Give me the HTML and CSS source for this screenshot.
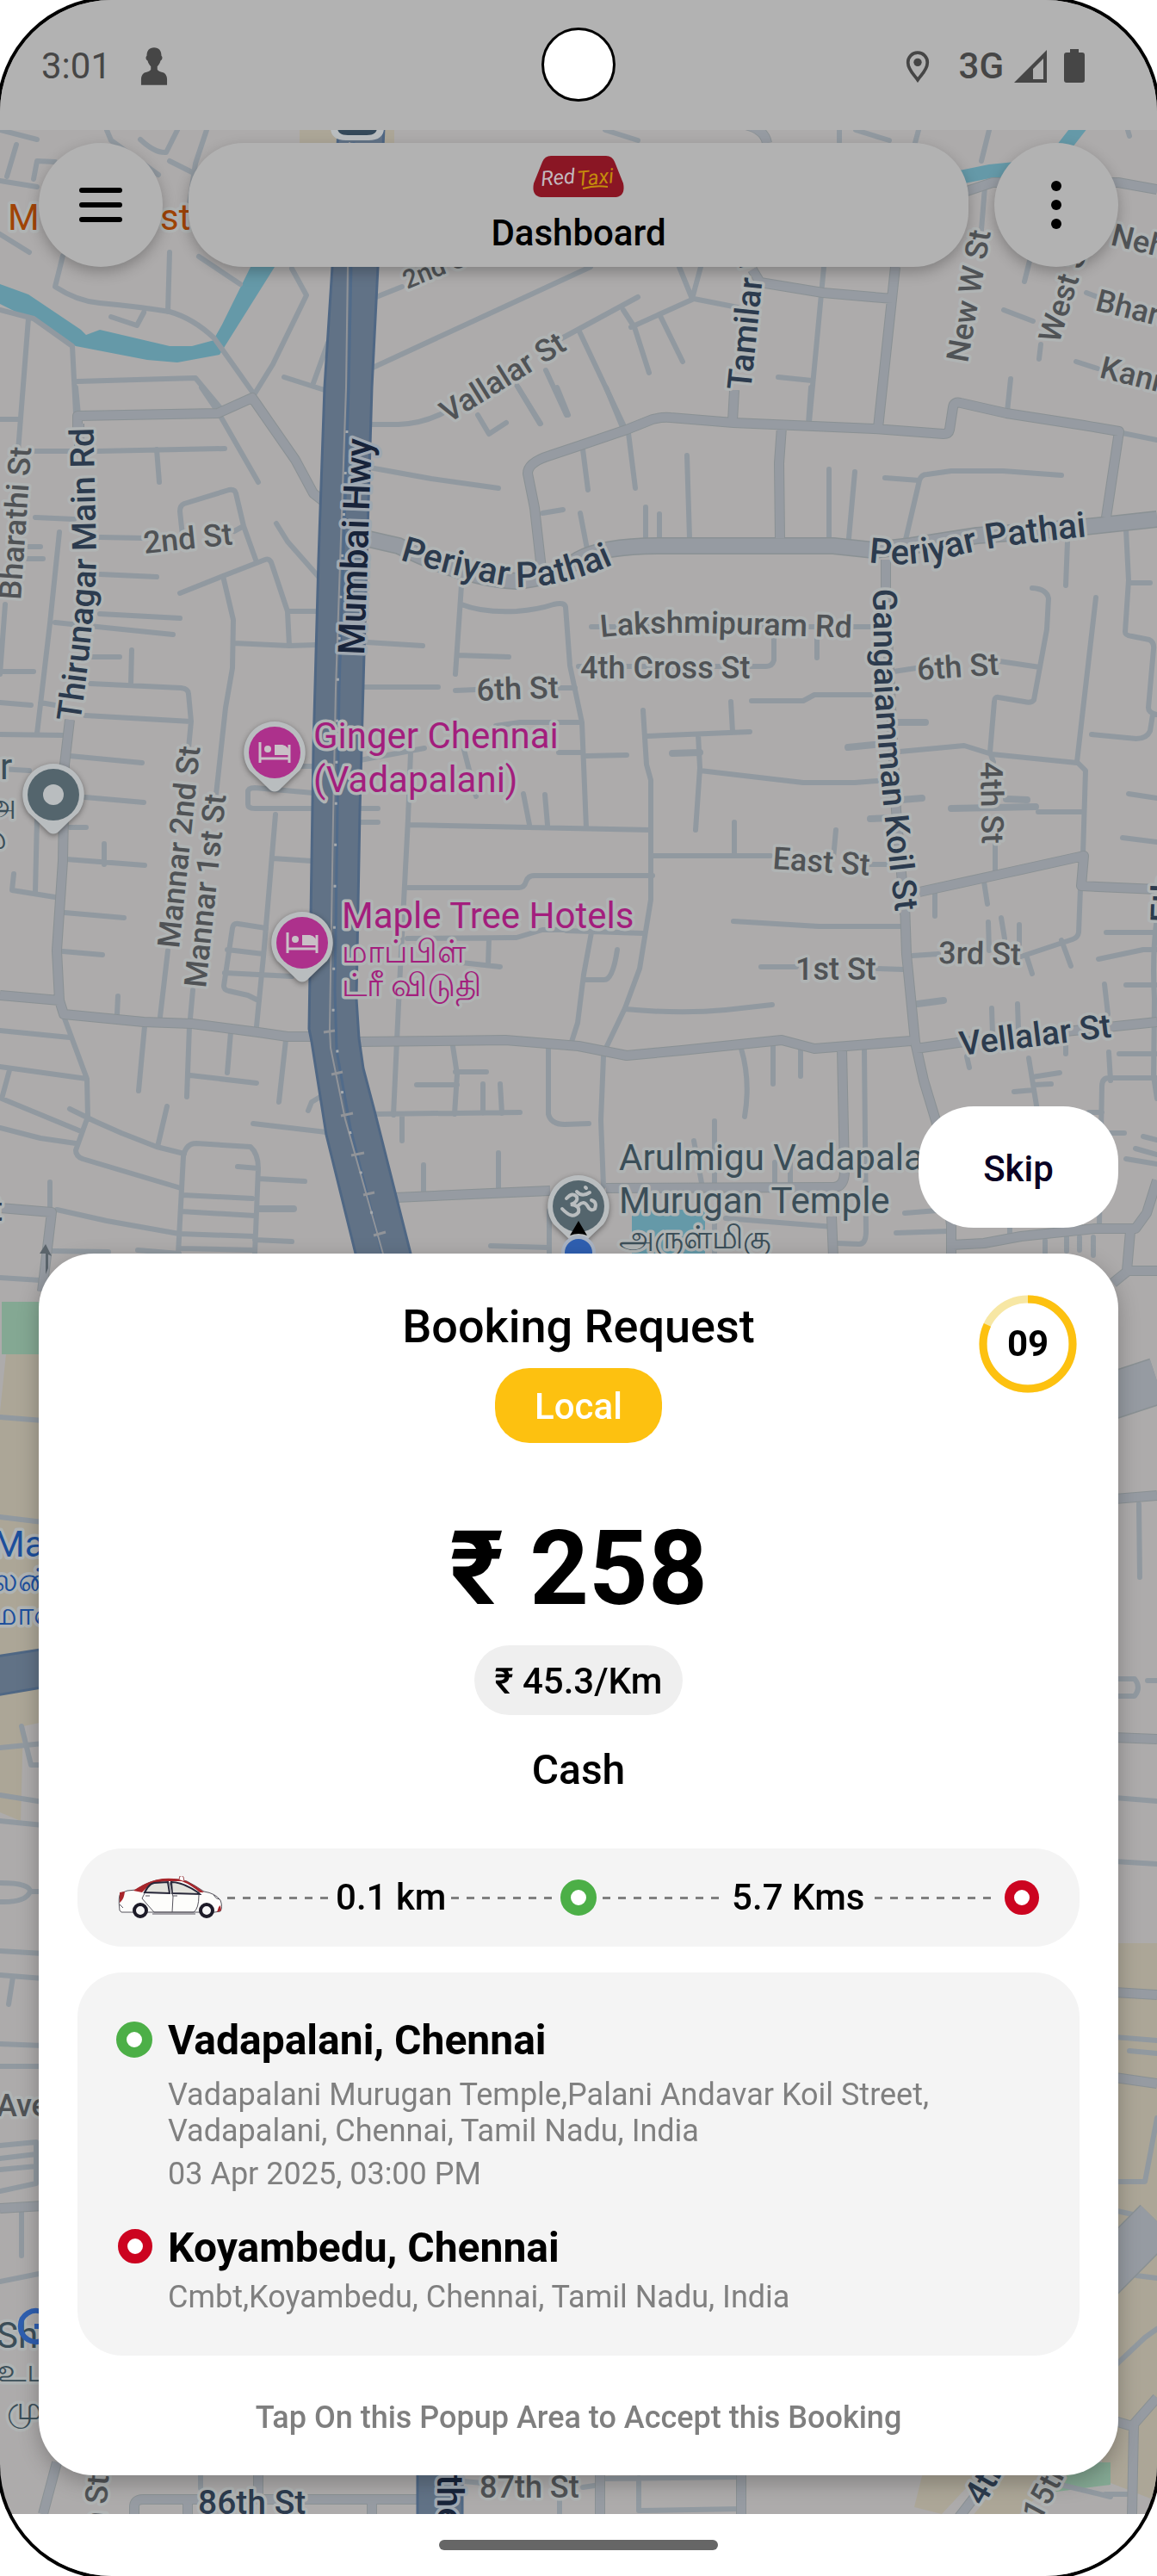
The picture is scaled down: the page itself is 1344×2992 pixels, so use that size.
FILE: index.html
```
<!DOCTYPE html>
<html lang="en">
<head>
    <meta charset="UTF-8">
    <meta name="viewport" content="width=device-width, initial-scale=1.0">
    <link rel="stylesheet" href="styles.css">
    <title>Red Taxi - Booking Request</title>
</head>
<body>
<div class="phone">

    <!-- map -->
    <svg class="map" viewBox="0 0 1344 2992" preserveAspectRatio="xMidYMin slice" aria-hidden="true">
        <defs>
            <path id="thirunagar" d="M93 839Q108 740 112 650L108 480"/>
            <path id="periyar1" d="M464 650Q540 673 592 681Q650 686 724 650"/>
            <path id="periyar2" d="M1009 653Q1060 660 1110 646Q1150 634 1275 622"/>
            <path id="lakshmi" d="M698 740Q770 733 840 736L1000 741"/>
            <path id="gangai" d="M1014 684L1016 800Q1024 940 1044 1090"/>
            <g id="bed">
                <path d="M-17-12V12M-17 7H17M17-9V12" fill="none" stroke="#c9c0c6" stroke-width="3"/>
                <circle cx="-8" cy="-4" r="4" fill="#c9c0c6"/>
                <path d="M0-9H9Q17-8 17 3H0z" fill="#c9c0c6"/>
            </g>
            <path id="pin" d="M0-36A36 36 0 0 1 29 21Q18 31 8 41Q0 50-8 41Q-18 31-29 21A36 36 0 0 1 0-36z"/>
        </defs>

        <!-- parks and land -->
        <path fill="#aca697" d="M0 1640L7 1573H60V1998L27 2005L24 2115L0 2105zM1280 2257H1344V2905L1280 2880zM1075 2860H1150L1094 2920L1062 2912zM1180 2860H1245L1182 2922H1130zM348 151H458V166H348z"/>
        <path fill="#84a893" d="M2 1512H60V1573H2zM1220 2895L1240 2860H1290V2886z"/>
        <!-- water -->
        <path fill="#6599a8" d="M0 330L33 342L94 383L100 389L116 383L197 402L223 402L249 395L296 300H319L255 412L206 421L171 418L88 402L34 370L0 353zM296 310L310 240H330L319 310L255 412L245 400zM734 1405H819V1465H734z"/>
        <path fill="none" stroke="#6599a8" stroke-width="16" d="M1110 207L1150 199L1200 194L1235 172L1256 145"/>

        <!-- small streets -->
        <g class="street">
            <path d="M0 151L43 162M19 168L8 205M0 210L43 217M39 208L43 187L64 188M0 272L34 293M124 151L129 163L184 203M163 162Q180 178 193 177L206 151M240 151L227 190M197 187L223 200M227 190L218 250"/>
            <path d="M73 297L64 333Q90 350 116 352Q160 356 197 362Q225 370 249 393L293 455M197 293L195 362M231 298L279 330M129 368L159 378L167 363M339 312L356 343L317 423L296 457M381 398L364 445M330 438L377 453M0 360L39 370L84 402L88 480M33 370L21 524M90 443L227 439L257 475"/>
            <path d="M433 427L686 310M437 345L467 333M429 493H463Q490 492 514 480M634 403L741 345M673 385L724 493M733 380L806 347L857 357M724 360L737 380L754 433M767 367L793 420M789 310L804 347L814 310M634 430L658 482M600 447L627 492M957 310L940 490M904 438L943 442M703 151L741 163M994 151L1033 163M975 151V165M1067 151L1063 166M1149 151L1140 187M1144 217L1140 267M1196 303L1190 327M1166 360L1200 373M1209 400L1207 417M1174 440L1170 478M1250 420L1275 428M1262 340L1275 345M1310 151L1312 158"/>
            <path d="M0 487H21M88 450L92 492M41 524H81M114 524L261 521M182 522L185 560M257 485L300 560M234 450L253 478M212 622L209 594Q209 587 214 585L266 569Q273 568 274 573L283 611L297 650M272 617L283 611M41 601L86 603M116 624L167 625M69 618L58 724L43 852M32 635H47M32 649H50M6 702L0 783M0 780H39M116 667L182 670M116 713L209 718M64 723L201 737M107 763H139M153 755L152 795M105 794L210 799Q219 800 219 806L222 838L219 869M99 831L222 838M0 816L36 819M47 816L64 819M0 853L73 854"/>
            <path d="M209 689L259 669L308 650Q314 648 316 656L334 710L336 750M259 669L271 720L270 776L262 822L251 923M334 710H369M272 747L336 750L368 749M321 608L334 629L371 671M81 878L165 886M99 926L167 932M81 961H100M0 893L34 895M364 921L296 915Q288 915 288 920V934Q288 939 296 939H364M351 890H364M320 946L314 1017L306 1111L298 1192M317 997L362 1000"/>
            <path d="M429 543L501 556L579 567M555 482L568 504L588 491M602 450L628 492M647 450L660 482M630 596L654 592M536 680L529 783M536 702Q561 712 600 710Q625 708 643 702Q656 699 657 705L662 773L676 839L681 962M531 761L591 763M426 746L491 750M418 798H509M529 802L553 801M649 799H668M418 883L493 869M576 843L604 839H676M539 871L553 925M649 874H676M477 874L474 951L465 1125L461 1209L457 1295M474 958L756 964M608 922L615 958M633 923L636 958M416 939H439M416 955H439"/>
            <path d="M1304 503L1344 511M704 450L723 496M730 503L738 567M677 522L683 569M942 450L939 492M798 529L801 625M750 589V625M766 597V625M963 545V625M993 548L986 625M1028 555L1068 558L1051 631M1068 558Q1070 551 1077 551L1105 547H1165L1233 552M674 596L683 643M1240 629L1238 680M1308 615L1311 674L1307 734Q1307 738 1315 739L1335 743Q1341 746 1340 754L1334 822Q1334 828 1344 830M1311 677H1336M1339 830L1336 849Q1332 858 1320 858L1268 853"/>
            <path d="M1199 683Q1216 684 1218 695L1216 731L1201 813Q1198 817 1190 815L1160 810Q1155 809 1155 815L1150 874L1154 885M1161 768L1208 775M1038 780L1064 776M1273 694L1251 885L1261 895L1258 992M1045 873L1120 866L1152 876L1251 886M687 728H1011M949 741V764M899 741V767Q897 774 890 774H672M873 814H933L946 807H1015M747 825L751 888L756 906V1045L743 1125L726 1171L704 1217M751 855L871 850M849 815L851 850M811 853L813 892L808 964M813 895L933 909H993L1019 907M681 878L728 877M758 994H895M853 955V993M971 964L968 997M1003 1004H1030M1206 943H1259M1311 922L1344 927M1304 973L1344 978"/>
            <path d="M474 1031H603Q609 1031 611 1024T621 1017H758M1255 1032L1253 1083Q1252 1089 1246 1091L1186 1111M1192 1109L1199 1131M1233 1092L1244 1122M1156 978V1011M1143 1024L1147 1050M1086 1038V1064M852 1070L951 1076H1049M884 1123H925M1019 1125L1049 1126M1060 1110L1090 1108M726 1172Q790 1178 843 1173L897 1167M1148 1071L1149 1104M1163 1066L1167 1090M1184 1074V1097M658 1081L747 1084M687 1083L678 1132L671 1188L664 1210M717 1103Q712 1138 702 1138H681M861 1218Q872 1255 865 1297M898 1215V1259M930 1218V1250M1004 1218L1006 1430Q1006 1445 998 1445L972 1444M701 1227L698 1301L701 1378M656 1306L684 1305M830 1302V1374M806 1325L815 1374M900 1350V1375M918 1350V1375M830 1420V1456M843 1415L968 1425M1051 1409L1101 1405M1041 1432L1101 1430"/>
            <path d="M1152 1171L1153 1202M1182 1166L1183 1195M1283 1143L1287 1178M1123 1227L1126 1240M1238 1213V1224M1288 1222L1290 1255M1344 1252H1288Q1280 1252 1280 1262L1277 1422M1195 1229L1205 1290M1199 1251L1231 1246M1178 1268L1201 1266M1201 1260L1221 1259M1344 1065Q1338 1110 1341 1160L1340 1250L1344 1276M1285 1083H1344M1276 1114L1328 1103H1344M1308 1144H1344M1300 1224H1344M1265 1292H1280M1289 1316H1306M1328 1320L1344 1324M1319 1334L1344 1341M1308 1346L1344 1352M1214 1441V1456M1239 1437V1453M1254 1437V1452M1270 1437V1458M1173 1425V1440"/>
            <path d="M43 950L41 1036M16 1015L14 1034L64 1042M121 980V1004M77 998L168 1005M75 1060L144 1066M73 1105L119 1109M137 1157L136 1178M195 1104L186 1181M224 1150L221 1183M168 1192L161 1267M220 1192L217 1274M268 1199L264 1246M332 1208L324 1280M221 1249L298 1258M309 1078L277 1073Q271 1072 270 1078L260 1145Q260 1150 266 1151L288 1156L298 1161M264 1103L306 1108M261 1130L339 1134M75 1183L101 1253L102 1297L88 1336Q88 1343 96 1346L210 1380M0 1197L81 1205M0 1239L101 1253M11 1243L2 1276L94 1314M0 1310L47 1322L88 1328M81 1288Q110 1303 141 1316L182 1332L214 1340M194 1285L183 1332"/>
            <path d="M207 1456L213 1343Q216 1328 228 1328L291 1332Q300 1340 300 1357L296 1456M276 1355L300 1357M300 1369L354 1372M212 1388L293 1392M210 1407L296 1412M296 1440L339 1442M66 1405L124 1418L208 1433L296 1436M58 1373V1406M60 1453L126 1454M160 1452L208 1456M208 1450L296 1452M294 1305L379 1315M372 1274L362 1280L358 1290M0 1484L47 1487M473 1090L600 1089L630 1080H658M568 1090L567 1121M527 1117L581 1123M526 1215L531 1248L528 1294M529 1245H565M484 1260H531M561 1259V1293M581 1259L583 1293M435 1294L604 1292M637 1215V1294Q640 1306 656 1306M467 1295V1325M492 1353V1385M579 1339V1383M638 1406V1456M570 1447L638 1449"/>
            <!-- strips beside and below the sheet -->
            <path d="M0 1646L50 1650M0 1762L50 1768M0 2030L50 2025M25 2005L36 2050H50M0 2085L50 2093M0 2115L50 2120M0 2187Q35 2187 35 2197Q30 2210 0 2209M35 2197H50M0 2266L50 2269M0 2294L50 2298M15 2296L10 2328M0 2374L50 2376M0 2400H50M0 2492L42 2488V2536L0 2545M0 2507L42 2502M0 2520L42 2516M25 2570V2620M0 2650L50 2640"/>
            <path d="M1323 1747L1324 1832M1295 1950H1318Q1326 1960 1318 1970H1295M1333 1952H1344M1295 2088L1344 2092M1295 2162L1344 2165M1295 2366L1344 2370M1312 2382L1344 2385M1295 2534H1330L1344 2460M1284 2565L1320 2573M1320 2643L1344 2646M1295 2748L1330 2715L1344 2705M1284 2897H1310M233 2870V2890M539 2882L560 2884M677 2889L697 2886M650 2905V2920M704 2879L861 2877M742 2878V2916L861 2914M1228 2885L1290 2900"/>
        </g>
        <!-- dead ends, a bit wider -->
        <path class="street stub" d="M1043 839H1075M985 868L1015 865M1047 929L1071 927M1011 951L1036 950M781 875L813 874M1105 939L1203 937M1169 928L1193 929M1066 1166L1096 1162M300 1404H341"/>

        <!-- roads: a darker edge under a lighter middle -->
        <g class="road-edge">
            <path id="roads" d="M90 500V483L253 480L293 462L343 534L364 573L378 584M92 492V530M81 836L75 888L73 1000L66 1104L69 1162M0 1156L69 1162L74 1178L167 1187L223 1189L300 1199L334 1204H362M874 313L883 328L956 340L1037 347M1040 310L1020 497M853 453L851 489M866 145Q888 150 891 166M1123 222L1153 212H1299L1344 220M908 496L905 538L906 625M672 518L639 529Q613 537 613 550L621 590L630 670M672 518L728 499L758 487Q770 484 779 485L852 491L1015 498L1096 504Q1102 504 1103 499L1107 473Q1108 466 1116 468L1169 480L1259 494L1300 501L1285 601M1029 650V700L1041 941L1051 1062M1068 1036L1173 1013L1259 994L1256 1029L1344 1033M1051 1050L1053 1108L1063 1210L1073 1255L1092 1318L1105 1423V1460M416 1210L587 1208L672 1215L728 1226L792 1220L908 1208L946 1218L1058 1209M1064 1218L1113 1211L1344 1187M978 1218L981 1360Q981 1379 968 1379L704 1380M459 1391L639 1383M966 1413L968 1460M1105 1446L1143 1444L1186 1436L1272 1427H1319L1332 1409L1344 1371M1313 1430L1309 1476H1344M1293 1490L1309 1477M0 1403L60 1408L49 1500M1295 1741L1344 1737M1295 2018L1344 2020M1295 2314L1344 2317M1295 2413L1344 2420M1295 2812L1315 2818L1344 2785M1317 2818L1315 2920M0 2565L50 2562M66 2860L50 2920M156 2925V2912Q156 2903 166 2903H485M432 2905V2920M218 2905V2920M300 2870V2900M697 2870V2920M861 2870V2920M1163 2860L1113 2925"/>
            <path class="avenue" d="M428 626L463 634Q540 672 600 675Q640 672 672 650Q700 634 766 634H968L1015 639L1058 634L1135 622L1251 613L1344 603"/>
            <path class="boulevard" d="M1280 1625L1344 1604M1270 2655L1344 2580"/>
        </g>
        <g class="road">
            <use href="#roads"/>
            <path class="avenue" d="M428 626L463 634Q540 672 600 675Q640 672 672 650Q700 634 766 634H968L1015 639L1058 634L1135 622L1251 613L1344 603"/>
            <path class="boulevard" d="M1280 1625L1344 1604M1270 2655L1344 2580"/>
        </g>

        <!-- highway -->
        <g fill="#617286" stroke="#4f6784" stroke-width="3">
            <path d="M393 148L386 310L377 450L370 650L364 870L362 1000L359 1195L362 1210L379 1318L414 1460H478L435 1290L422 1241L417 1206L414 1160L418 941L426 650L432 450L439 310L446 148z"/>
            <path d="M-5 1924L60 1914V1958L-5 1969zM485 2860H537V2925H485z"/>
        </g>
        <path fill="none" stroke="#516b8a" stroke-width="3" d="M411 165L405 450L394 800L389 1150L391 1220L407 1310L444 1456"/>
        <path fill="none" stroke="#919499" stroke-width="2" d="M406 165L402 450L390 800L387 950L383 1195L384 1217L401 1300L446 1460"/>
        <path fill="none" stroke="#919499" stroke-width="3" d="M376 1199L389 1197M385 1248L398 1245M396 1296L410 1293M408 1342L423 1339M422 1388L435 1385M434 1435L448 1431"/>
        <path fill="none" stroke="#a6aaae" stroke-width="3" stroke-dasharray="3 45" d="M403 500L392 800L387 1180L400 1290L440 1440"/>
        <path d="M384 148H446Q446 163 428 163H402Q384 163 384 148z" fill="#b9bdbf"/>
        <path d="M392 148H438Q438 157 426 157H404Q392 157 392 148z" fill="#34495a"/>
        <path d="M53 1480V1456H46L53 1445L60 1459L56 1457V1473z" fill="#5b646b"/>

        <!-- street names -->
        <g class="label">
            <text transform="translate(24 697) rotate(-86)">Bharathi St</text>
            <text transform="translate(168 643) rotate(-6)">2nd St</text>
            <text transform="translate(521 492) rotate(-32)">Vallalar St</text>
            <text class="small" transform="translate(473 336) rotate(-22)">2nd St</text>
            <text transform="translate(1124 422) rotate(-80)">New W St</text>
            <text transform="translate(1230 400) rotate(-73)">West St</text>
            <text transform="translate(1289 284) rotate(14)">Nehru</text>
            <text transform="translate(1271 360) rotate(14)">Bharathi</text>
            <text transform="translate(1276 438) rotate(14)">Kannan</text>
            <text><textPath href="#lakshmi">Lakshmipuram Rd</textPath></text>
            <text x="674" y="788">4th Cross St</text>
            <text transform="translate(554 814) rotate(-2)">6th St</text>
            <text transform="translate(1066 790) rotate(-4)">6th St</text>
            <text transform="translate(1139 885) rotate(89)">4th St</text>
            <text transform="translate(897 1009) rotate(4)">East St</text>
            <text x="924" y="1138">1st St</text>
            <text transform="translate(1090 1119) rotate(1)">3rd St</text>
            <text transform="translate(208 1102) rotate(-84)">Mannar 2nd St</text>
            <text transform="translate(239 1148) rotate(-84)">Mannar 1st St</text>
            <text x="-4" y="2458">Ave</text>
            <text x="557" y="2901">87th St</text>
            <text transform="translate(122 2938) rotate(-86)">n St</text>
            <text transform="translate(1208 2930) rotate(-62)">15th</text>
        </g>
        <g class="label main">
            <text><textPath href="#thirunagar">Thirunagar Main Rd</textPath></text>
            <text class="wide"><textPath href="#periyar1">Periyar Pathai</textPath></text>
            <text class="wide"><textPath href="#periyar2">Periyar Pathai</textPath></text>
            <text><textPath href="#gangai">Gangaiamman Koil St</textPath></text>
            <text transform="translate(872 454) rotate(-84)">Tamilar V</text>
            <text transform="translate(1116 1226) rotate(-7)">Vellalar St</text>
            <text x="-10" y="1418">t</text>
            <text transform="translate(1364 1072) rotate(-88)">Eth</text>
            <text x="230" y="2920">86th St</text>
            <text transform="translate(1142 2912) rotate(-60)">4th</text>
        </g>
        <g class="label highway">
            <text transform="translate(423 761) rotate(-88)">Mumbai Hwy</text>
            <text transform="translate(508 2874) rotate(90)">the</text>
        </g>

        <!-- places -->
        <g class="place food">
            <text x="9" y="267">M</text>
            <text x="186" y="267">st</text>
        </g>
        <g class="place hotel">
            <text x="364" y="869">Ginger Chennai</text>
            <text x="364" y="920">(Vadapalani)</text>
            <text x="397" y="1078">Maple Tree Hotels</text>
            <text class="tamil" x="397" y="1118">மாப்பிள்</text>
            <text class="tamil" x="397" y="1157">ட்ரீ விடுதி</text>
        </g>
        <g class="place temple">
            <text x="719" y="1359">Arulmigu Vadapalani</text>
            <text x="719" y="1409">Murugan Temple</text>
            <text class="tamil" x="719" y="1450">அருள்மிகு</text>
            <text x="0" y="905">r</text>
            <text class="tamil" x="-22" y="948">அ</text>
            <text class="tamil" x="-22" y="986">ம்</text>
            <text x="-4" y="2727">Sho</text>
            <text class="tamil" x="-3" y="2766">உட</text>
            <text class="tamil" x="8" y="2810">மு</text>
        </g>
        <g class="place shop">
            <text x="-8" y="1808">Mal</text>
            <text class="tamil" x="-10" y="1848">லண்</text>
            <text class="tamil" x="-10" y="1887">மான</text>
        </g>
        <path fill="none" stroke="#2f5fb0" stroke-width="6" d="M50 2686A18 18 0 1 0 50 2718M40 2702H50"/>

        <g class="pin">
            <use href="#pin" x="319" y="874"/>
            <circle cx="319" cy="874" r="30" fill="#ad318c"/>
            <use href="#bed" x="319" y="874"/>
            <use href="#pin" x="351" y="1095"/>
            <circle cx="351" cy="1095" r="30" fill="#ad318c"/>
            <use href="#bed" x="351" y="1095"/>
            <use href="#pin" x="62" y="923"/>
            <circle cx="62" cy="923" r="30" fill="#54656d"/>
            <circle cx="62" cy="923" r="12"/>
            <use href="#pin" x="672" y="1401"/>
            <circle cx="672" cy="1401" r="30" fill="#54656d"/>
            <g fill="none" stroke="#b9bdbf" stroke-width="4" stroke-linecap="round">
                <path d="M658 1392Q665 1384 670 1390Q672 1396 663 1399Q674 1400 672 1408Q665 1417 653 1404M672 1400Q678 1394 682 1400Q686 1408 691 1404Q694 1396 687 1394M670 1384Q676 1391 685 1385M680 1379L681 1380"/>
            </g>
        </g>
        <circle cx="672" cy="1455" r="18" fill="#2f5fb0" stroke="#a9b3c2" stroke-width="4"/>
        <path d="M672 1418L682 1435Q672 1431 662 1435z"/>
    </svg>

    <div class="status-bar">
        <span class="clock">3:01</span>
        <svg class="status-icon" width="32" height="46" viewBox="0 0 34 46" aria-hidden="true"><path fill="#464646" d="M17 0c6 0 9 4 9 10 2 2 1 5-1 6-1 4-3 6-4 7v4c1 2 4 3 8 4 3 2 4 5 4 8v7H1v-7c0-3 1-6 4-8 4-1 7-2 8-4v-4c-1-1-3-3-4-7-2-1-3-4-1-6 0-6 3-10 9-10z"/></svg>
        <span class="fill"></span>
        <svg class="status-icon" width="28" height="38" viewBox="0 0 30 38" aria-hidden="true"><path fill="none" stroke="#464646" stroke-width="4" d="M15 2a12 12 0 0 1 12 13c0 8-7 14-12 21C10 29 3 23 3 15A12 12 0 0 1 15 2z"/><circle cx="15" cy="14" r="5" fill="#464646"/></svg>
        <span class="network">3G</span>
        <svg class="signal" width="38" height="38" viewBox="0 0 38 38" aria-hidden="true"><path fill="#464646" fill-rule="evenodd" d="M38 0v38H0zM34 10L22 22v12h12z"/></svg>
        <svg class="battery" width="24" height="39" viewBox="0 0 24 39" aria-hidden="true"><path fill="#464646" d="M7 0h10v4h4q3 0 3 3v29q0 3-3 3H3q-3 0-3-3V7q0-3 3-3h4z"/></svg>
    </div>
    <div class="camera"></div>

    <header class="top-bar">
        <button class="round-btn" aria-label="Menu">
            <svg width="52" height="40" viewBox="0 0 52 40"><path d="M4 3H48M4 20H48M4 37H48" stroke="#000" stroke-width="6" stroke-linecap="round"/></svg>
        </button>
        <div class="title-pill">
            <svg width="106" height="48" viewBox="0 0 106 48" role="img" aria-label="Red Taxi">
                <path d="M21 0H85Q92 0 95 7L105 32Q108 48 94 48H12Q-2 48 1 32L11 7Q14 0 21 0z" fill="#8a1624"/>
                <text class="logo-text" transform="translate(10 35) rotate(-5)" fill="#c3b9bf">Red</text>
                <text class="logo-text" transform="translate(52 35) rotate(-5)" fill="#c58c0c">Taxi</text>
                <path d="M58 38Q72 34 87 36" fill="none" stroke="#c58c0c" stroke-width="2"/>
            </svg>
            <h1>Dashboard</h1>
        </div>
        <button class="round-btn" aria-label="More">
            <svg width="12" height="58" viewBox="0 0 12 58"><circle cx="6" cy="7" r="6"/><circle cx="6" cy="29" r="6"/><circle cx="6" cy="51" r="6"/></svg>
        </button>
    </header>

    <main>
        <button class="skip">Skip</button>

        <section class="sheet">
            <div class="timer">
                <svg viewBox="0 0 114 114" aria-hidden="true">
                    <circle cx="57" cy="57" r="52" class="ring"/>
                    <circle cx="57" cy="57" r="52" class="ring left" pathLength="100"/>
                </svg>
                <span>09</span>
            </div>

            <h2>Booking Request</h2>
            <div class="trip-type">Local</div>
            <div class="fare">₹ 258</div>
            <div class="rate">₹ 45.3/Km</div>
            <div class="payment">Cash</div>

            <div class="route">
                <div class="leg">
                    <svg class="car" width="121" height="50" viewBox="0 0 121 50" aria-hidden="true">
                        <path d="M2 40Q0 24 3 20Q10 16 21 16Q36 5 52 4Q70 3 80 6Q90 11 100 18Q113 20 119 28Q122 36 119 41L112 42H4z" fill="#fdfdfb" stroke="#55535c" stroke-width="1"/>
                        <path d="M18 17Q35 5 52 3Q70 2 80 6Q92 12 100 19L95 19Q83 9 74 6L57 6Q43 7 37 10L28 19z" fill="#a8262b"/>
                        <path d="M2 19L8 18Q7 26 4 29L2 31z" fill="#a8262b"/>
                        <path d="M119 34L120 40L115 42L117 36z" fill="#a8262b"/>
                        <path d="M31 19Q36 9 42 8L58 7L60 20zM62 7Q75 7 93 19L95 21L63 20z" fill="#e2e2dc" stroke="#262638" stroke-width="2"/>
                        <path d="M60 7L64 24L63 42M31 20L28 26Q33 32 42 42H88Q94 38 94 22M111 22Q114 27 118 27M2 33L6 37M40 44H90M32 23H37M64 23H69" fill="none" stroke="#55535c" stroke-width="1"/>
                        <path d="M71 4L72 0Q75-1 76 1L77 6" fill="#fff" stroke="#9d4b50" stroke-width="1"/>
                        <circle cx="26" cy="40" r="7" fill="#f6f6f6" stroke="#1d1b28" stroke-width="4"/>
                        <circle cx="103" cy="40" r="7" fill="#f6f6f6" stroke="#1d1b28" stroke-width="4"/>
                    </svg>
                    <span class="dashes"></span>
                    <span>0.1 km</span>
                    <span class="dashes"></span>
                </div>
                <span class="dot pickup"></span>
                <div class="leg wide">
                    <span class="dashes"></span>
                    <span>5.7 Kms</span>
                    <span class="dashes"></span>
                    <span class="dot drop"></span>
                </div>
            </div>

            <div class="stops">
                <div class="stop">
                    <span class="dot pickup"></span>
                    <div>
                        <h3>Vadapalani, Chennai</h3>
                        <p class="address first">Vadapalani Murugan Temple,Palani Andavar Koil Street, Vadapalani, Chennai, Tamil Nadu, India</p>
                        <p>03 Apr 2025, 03:00 PM</p>
                    </div>
                </div>
                <div class="stop">
                    <span class="dot drop"></span>
                    <div>
                        <h3>Koyambedu, Chennai</h3>
                        <p>Cmbt,Koyambedu, Chennai, Tamil Nadu, India</p>
                    </div>
                </div>
            </div>

            <p class="hint">Tap On this Popup Area to Accept this Booking</p>
        </section>
    </main>

    <div class="nav-bar"><span></span></div>
</div>
</body>
</html>
```
FILE: styles.css
```
* {
    box-sizing: border-box;
}

body {
    margin: 0;
    background-color: white;
    font-family: Roboto, "Noto Sans", sans-serif;
    font-size: 42px;
    font-weight: 500;
    line-height: 48px;
    color: black;
}

h1, h2, h3, p {
    margin: 0;
}

button {
    border: none;
    padding: 0;
    font: inherit;
    cursor: pointer;
}

.phone {
    position: relative;
    min-height: 100vh;
    display: flex;
    flex-direction: column;
    overflow: hidden;
    border-radius: 130px;
    background-color: #adabab;
    box-shadow: 0 0 0 4px black;
}

/* ---------- map ---------- */

.map {
    position: absolute;
    top: 0;
    left: 0;
    width: 100%;
    height: 100%;
}

.street {
    fill: none;
    stroke: #9199a0;
    stroke-width: 6px;
    stroke-linecap: round;
    stroke-linejoin: round;
}

.stub {
    stroke-width: 8px;
}

.road-edge, .road {
    fill: none;
    stroke-linejoin: round;
}

.road-edge {
    stroke: #8a9194;
    stroke-width: 12px;
}

.road {
    stroke: #969ba2;
    stroke-width: 10px;
}

.road-edge .avenue {
    stroke-width: 20px;
}

.road .avenue {
    stroke-width: 17px;
}

.road-edge .boulevard {
    stroke-width: 55px;
}

.road .boulevard {
    stroke-width: 52px;
}

.label, .place {
    paint-order: stroke;
    stroke: #b0b4b4;
    stroke-width: 7px;
    stroke-linejoin: round;
}

.label {
    font-size: 36px;
    fill: #505356;
}

.label .small {
    font-size: 30px;
}

.label.main {
    font-size: 39px;
    fill: #2c3b4e;
}

.label.main .wide {
    font-size: 41px;
}

.label.highway {
    font-size: 43px;
    fill: #18243a;
    stroke: #9fa8b1;
}

.place {
    font-size: 42px;
    font-weight: 400;
}

.place .tamil {
    font-size: 37px;
}

.food { fill: #a04407; }
.hotel { fill: #a31e7d; }
.temple { fill: #3b4e58; }
.shop { fill: #1c4f9c; }

.pin {
    fill: #b9bdbf;
    filter: drop-shadow(0 2px 3px rgba(0, 0, 0, 0.4));
}

/* ---------- status bar ---------- */

.status-bar {
    position: relative;
    height: 151px;
    flex: none;
    display: flex;
    align-items: center;
    padding: 2px 84px 0 48px;
    background-color: #b2b2b2;
    color: #464646;
}

.clock {
    font-weight: 400;
    margin-right: 34px;
}

.fill {
    flex: 1;
}

.network {
    margin-left: 34px;
}

.signal {
    margin-left: 12px;
}

.battery {
    margin-left: 20px;
}

.camera {
    position: absolute;
    top: 32px;
    left: 50%;
    width: 86px;
    height: 86px;
    transform: translateX(-50%);
    border: 3px solid black;
    border-radius: 50%;
    background-color: white;
}

/* ---------- top bar ---------- */

.top-bar {
    position: relative;
    display: flex;
    gap: 30px;
    padding: 15px 45px;
}

.round-btn, .title-pill {
    display: flex;
    align-items: center;
    justify-content: center;
    height: 144px;
    background-color: #b2b2b2;
    box-shadow: 0 6px 16px rgba(0, 0, 0, 0.25);
}

.round-btn {
    flex: none;
    width: 144px;
    border-radius: 50%;
}

.title-pill {
    flex: 1;
    flex-direction: column;
    gap: 18px;
    border-radius: 64px;
}

.title-pill h1 {
    font-size: 42px;
    font-weight: 500;
}

.logo-text {
    font-size: 24px;
    font-style: italic;
    font-weight: 400;
}

/* ---------- booking request ---------- */

main {
    position: relative;
    flex: 1;
    display: flex;
    flex-direction: column;
    justify-content: flex-end;
    padding: 0 45px 45px;
}

.skip {
    align-self: flex-end;
    width: 232px;
    height: 141px;
    margin-bottom: 30px;
    padding-top: 4px;
    border-radius: 64px;
    background-color: white;
    color: #0a0023;
}

.sheet {
    position: relative;
    display: flex;
    flex-direction: column;
    align-items: center;
    padding: 55px 45px 46px;
    border-radius: 64px;
    background-color: white;
    box-shadow: 0 8px 24px rgba(0, 0, 0, 0.25);
}

.timer {
    position: absolute;
    top: 48px;
    right: 48px;
    width: 114px;
    height: 114px;
    display: grid;
    place-items: center;
    font-weight: 700;
}

.timer svg, .timer span {
    grid-area: 1 / 1;
}

.ring {
    fill: none;
    stroke: #f7e7a4;
    stroke-width: 9px;
}

.ring.left {
    stroke: #fdc110;
    stroke-dasharray: 82 100;
    transform: rotate(-90deg);
    transform-origin: center;
}

h2 {
    font-size: 54px;
    font-weight: 500;
    line-height: 60px;
}

.trip-type {
    margin-top: 18px;
    padding: 21px 46px 18px;
    border-radius: 40px;
    background-color: #fdc110;
    color: white;
}

.fare {
    margin-top: 86px;
    font-size: 120px;
    font-weight: 700;
    line-height: 120px;
}

.rate {
    margin-top: 29px;
    padding: 18px 24px 15px;
    border-radius: 41px;
    background-color: #efefef;
}

.payment {
    margin-top: 36px;
    font-size: 48px;
    line-height: 56px;
}

.route, .stops {
    width: 100%;
    border-radius: 52px;
    background-color: #f4f4f4;
}

.route {
    display: grid;
    grid-template-columns: 1fr 43px 1fr;
    align-items: center;
    margin-top: 63px;
    padding: 32px 47px;
}

.leg {
    display: flex;
    align-items: center;
    gap: 6px;
    padding-right: 6px;
    white-space: nowrap;
}

.leg.wide {
    gap: 12px;
    padding: 0 0 0 6px;
}

.dashes {
    flex: 1;
    height: 3px;
    background-image: repeating-linear-gradient(to right, #808080 0 9px, transparent 9px 18px);
}

.dot {
    flex: none;
    display: block;
    width: 42px;
    height: 42px;
    border-radius: 50%;
    background-color: white;
}

.pickup {
    border: 12px solid #4caf47;
}

.drop {
    width: 40px;
    height: 40px;
    border: 11px solid #cc0420;
}

.stops {
    display: flex;
    flex-direction: column;
    gap: 37px;
    margin-top: 30px;
    padding: 51px 45px 47px;
}

.stop {
    display: flex;
    gap: 18px;
}

.stop .dot {
    margin-top: 6px;
}

.stop .drop {
    margin-left: 2px;
}

h3 {
    font-size: 48px;
    font-weight: 700;
    line-height: 56px;
}

.stop p {
    margin-top: 8px;
    font-size: 36px;
    font-weight: 400;
    line-height: 42px;
    color: #808080;
}

.stop .first {
    margin-top: 14px;
    max-width: 940px;
}

.hint {
    margin-top: 51px;
    font-size: 36px;
    line-height: 42px;
    color: #7f7f7f;
}

/* ---------- gesture bar ---------- */

.nav-bar {
    position: relative;
    height: 72px;
    flex: none;
    display: flex;
    align-items: center;
    justify-content: center;
    background-color: white;
}

.nav-bar span {
    width: 324px;
    height: 12px;
    border-radius: 6px;
    background-color: #666666;
}
```
